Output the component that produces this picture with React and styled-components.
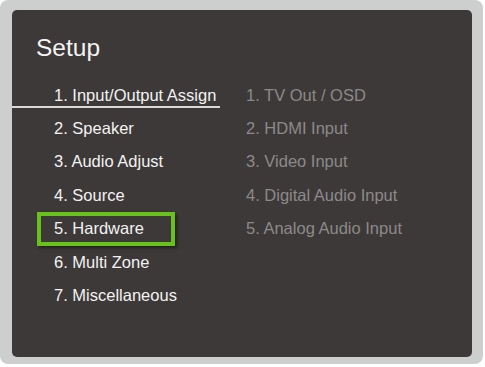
import React from "react";
import styled, { createGlobalStyle } from "styled-components";

const Global = createGlobalStyle`
  html, body { margin: 0; padding: 0; background: #ffffff; }
  body { font-family: "Liberation Sans", Arial, sans-serif; }
`;

const Frame = styled.div`
  width: 483px;
  height: 364px;
  box-sizing: border-box;
  background: #cdcfce;
  border-radius: 8px;
  padding: 10px 11px 7px 12px;
`;

const Panel = styled.div`
  height: 100%;
  background: #3d3938;
  border-radius: 5px;
  padding-top: 24px;
  box-sizing: border-box;
`;

const Title = styled.h1`
  margin: 0 0 17px 24px;
  font-weight: normal;
  font-size: 24.5px;
  line-height: 27.6px;
  color: #f4f4f4;
`;

const Body = styled.div`
  display: grid;
  grid-template-columns: 209px 1fr;
  padding-left: 25px;
`;

const Column = styled.div`
  display: flex;
  flex-direction: column;
`;

const Item = styled.div`
  position: relative;
  height: 33.4px;
  line-height: 33.4px;
  font-size: 16.5px;
  white-space: nowrap;
  box-sizing: border-box;
  color: ${(p) => (p.$dim ? "#8c8a89" : "#f2f2f2")};
  padding-left: ${(p) => (p.$dim ? "0" : "17px")};
  ${(p) =>
    p.$focus &&
    `
    width: 138px;
    border: 4px solid #69c21c;
    padding-left: 13px;
    line-height: 25.4px;
    box-shadow: 2px 2px 3px rgba(0,0,0,0.45);
  `}
  ${(p) =>
    p.$active &&
    `
    &::after {
      content: "";
      position: absolute;
      left: -25px;
      width: 208px;
      bottom: 4px;
      height: 2px;
      background: #d9d9d9;
    }
  `}
`;

const left = [
  "1. Input/Output Assign",
  "2. Speaker",
  "3. Audio Adjust",
  "4. Source",
  "5. Hardware",
  "6. Multi Zone",
  "7. Miscellaneous",
];

const right = [
  "1. TV Out / OSD",
  "2. HDMI Input",
  "3. Video Input",
  "4. Digital Audio Input",
  "5. Analog Audio Input",
];

export default function App() {
  return (
    <>
      <Global />
      <Frame>
        <Panel>
          <Title>Setup</Title>
          <Body>
            <Column>
              {left.map((t, i) => (
                <Item key={t} $active={i === 0} $focus={i === 4}>
                  {t}
                </Item>
              ))}
            </Column>
            <Column>
              {right.map((t) => (
                <Item key={t} $dim>
                  {t}
                </Item>
              ))}
            </Column>
          </Body>
        </Panel>
      </Frame>
    </>
  );
}
